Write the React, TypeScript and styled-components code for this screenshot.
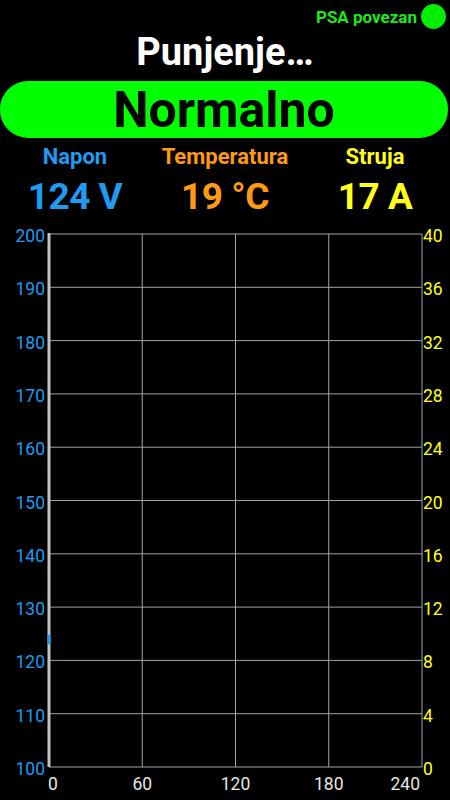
import styled, { createGlobalStyle } from 'styled-components';

const GlobalStyle = createGlobalStyle`
  html, body {
    margin: 0;
    padding: 0;
    background: #000;
  }
  body {
    font-family: Roboto, "Liberation Sans", sans-serif;
  }
  *, *::before, *::after {
    box-sizing: border-box;
  }
`;

const Screen = styled.div`
  width: 450px;
  height: 800px;
  background: #000;
  display: flex;
  flex-direction: column;
  overflow: hidden;
`;

const StatusBar = styled.div`
  display: flex;
  justify-content: flex-end;
  align-items: center;
  gap: 4px;
  height: 30px;
  flex: none;
  padding: 3px 4px 0 0;
`;

const StatusText = styled.span`
  color: #1ee81e;
  font-size: 17px;
  font-weight: 700;
`;

const StatusDot = styled.span`
  width: 25px;
  height: 25px;
  border-radius: 50%;
  background: #00ee00;
`;

const Title = styled.h1`
  margin: 0;
  height: 48px;
  flex: none;
  line-height: 44px;
  text-align: center;
  color: #fff;
  font-size: 38px;
  font-weight: 700;
`;

const ModePill = styled.div`
  margin: 3px 2px 0 0;
  height: 57px;
  flex: none;
  border-radius: 28px;
  background: #00ff00;
  display: flex;
  align-items: center;
  justify-content: center;
  color: #000;
  font-size: 50px;
  font-weight: 700;
  line-height: 1;
`;

const Stats = styled.div`
  display: grid;
  grid-template-columns: repeat(3, 1fr);
  height: 84px;
  flex: none;
  padding-top: 5px;
`;

const Stat = styled.div<{ $color: string }>`
  display: flex;
  flex-direction: column;
  align-items: center;
  color: ${(p) => p.$color};
  font-weight: 700;
`;

const StatLabel = styled.span`
  font-size: 22px;
  line-height: 28px;
`;

const StatValue = styled.span`
  font-size: 37px;
  line-height: 51px;
  letter-spacing: -0.5px;
`;

const Chart = styled.svg`
  display: block;
  flex: none;
  font-family: Roboto, "Liberation Sans", sans-serif;
`;

const BLUE = '#1f9bf0';
const ORANGE = '#ff9a14';
const YELLOW = '#ffff1a';

const CHART_TOP = 222;
const LEFT = 49;
const RIGHT = 422;
const TOP = 234;
const BOTTOM = 767;

const voltTicks = [200, 190, 180, 170, 160, 150, 140, 130, 120, 110, 100];
const ampTicks = [40, 36, 32, 28, 24, 20, 16, 12, 8, 4, 0];
const timeTicks = [0, 60, 120, 180, 240];

const yFor = (i: number) => TOP + ((BOTTOM - TOP) * i) / 10;
const xFor = (i: number) => LEFT + ((RIGHT - LEFT) * i) / 4;

const stats = [
  { label: 'Napon', value: '124 V', color: BLUE },
  { label: 'Temperatura', value: '19 °C', color: ORANGE },
  { label: 'Struja', value: '17 A', color: YELLOW }
];

const ChargeChart = (): JSX.Element => {
  const voltage = 124;
  const markerY = BOTTOM - ((voltage - 100) / 100) * (BOTTOM - TOP);

  return (
    <Chart width={450} height={800 - CHART_TOP} viewBox={`0 ${CHART_TOP} 450 ${800 - CHART_TOP}`}>
      {voltTicks.map((t, i) => (
        <line key={`h${t}`} x1={LEFT} x2={RIGHT} y1={yFor(i)} y2={yFor(i)} stroke="#a4a4a4" strokeWidth={1} />
      ))}
      {timeTicks.map((t, i) => (
        <line key={`v${t}`} x1={xFor(i)} x2={xFor(i)} y1={TOP} y2={BOTTOM} stroke="#a4a4a4" strokeWidth={1} />
      ))}
      <line x1={LEFT} x2={LEFT} y1={TOP - 1} y2={BOTTOM} stroke="#c4c4c4" strokeWidth={3} />
      <line x1={LEFT} x2={LEFT} y1={markerY - 3} y2={markerY + 4} stroke={BLUE} strokeWidth={3} strokeLinecap="round" />
      {voltTicks.map((t, i) => (
        <text key={`l${t}`} x={45} y={yFor(i) + 8} fill={BLUE} fontSize={17.5} textAnchor="end">{t}</text>
      ))}
      {ampTicks.map((t, i) => (
        <text key={`r${t}`} x={423} y={yFor(i) + 8} fill={YELLOW} fontSize={17.5}>{t}</text>
      ))}
      {timeTicks.map((t, i) => {
        const last = i === timeTicks.length - 1;
        const anchor = i === 0 ? 'start' : last ? 'end' : 'middle';
        const x = i === 0 ? 48 : last ? 420 : xFor(i);
        return (
          <text key={`b${t}`} x={x} y={790} fill="#e6e6e6" fontSize={17.5} textAnchor={anchor}>{t}</text>
        );
      })}
    </Chart>
  );
};

const App = (): JSX.Element => (
  <Screen>
    <GlobalStyle />
    <StatusBar>
      <StatusText>PSA povezan</StatusText>
      <StatusDot />
    </StatusBar>
    <Title>Punjenje…</Title>
    <ModePill>Normalno</ModePill>
    <Stats>
      {stats.map((s) => (
        <Stat key={s.label} $color={s.color}>
          <StatLabel>{s.label}</StatLabel>
          <StatValue>{s.value}</StatValue>
        </Stat>
      ))}
    </Stats>
    <ChargeChart />
  </Screen>
);

export default App;
